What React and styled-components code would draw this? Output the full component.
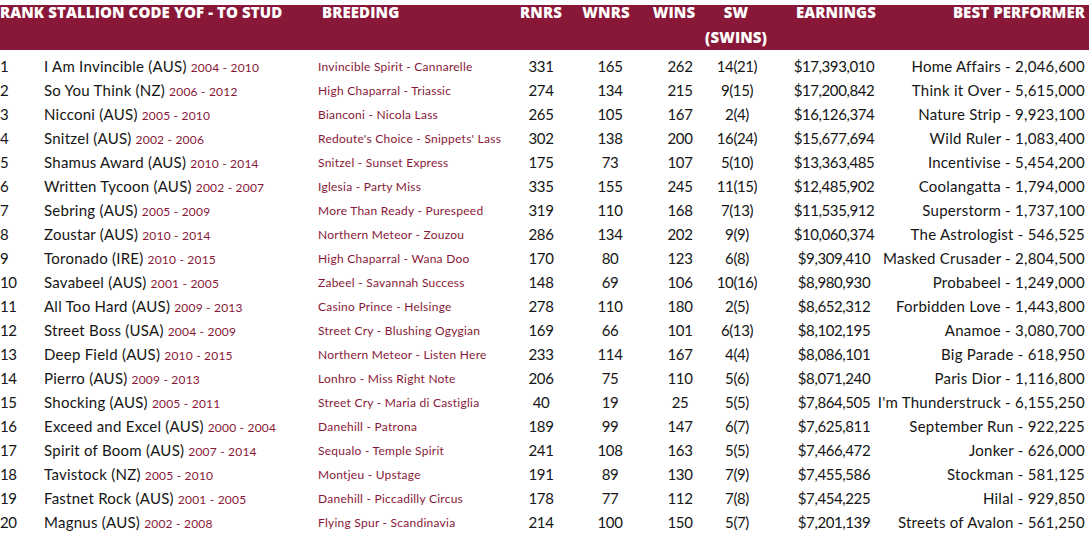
import React from 'react';
import styled, { createGlobalStyle } from 'styled-components';

const GlobalStyle = createGlobalStyle`
  html, body {
    margin: 0;
    padding: 0;
    background: #fff;
  }
  body {
    font-family: 'Lato', 'Liberation Sans', sans-serif;
    color: #151515;
  }
`;

const rows = [
  [1, 'I Am Invincible (AUS)', '2004 - 2010', 'Invincible Spirit - Cannarelle', 331, 165, 262, '14(21)', '$17,393,010', 'Home Affairs - 2,046,600'],
  [2, 'So You Think (NZ)', '2006 - 2012', 'High Chaparral - Triassic', 274, 134, 215, '9(15)', '$17,200,842', 'Think it Over - 5,615,000'],
  [3, 'Nicconi (AUS)', '2005 - 2010', 'Bianconi - Nicola Lass', 265, 105, 167, '2(4)', '$16,126,374', 'Nature Strip - 9,923,100'],
  [4, 'Snitzel (AUS)', '2002 - 2006', "Redoute's Choice - Snippets' Lass", 302, 138, 200, '16(24)', '$15,677,694', 'Wild Ruler - 1,083,400'],
  [5, 'Shamus Award (AUS)', '2010 - 2014', 'Snitzel - Sunset Express', 175, 73, 107, '5(10)', '$13,363,485', 'Incentivise - 5,454,200'],
  [6, 'Written Tycoon (AUS)', '2002 - 2007', 'Iglesia - Party Miss', 335, 155, 245, '11(15)', '$12,485,902', 'Coolangatta - 1,794,000'],
  [7, 'Sebring (AUS)', '2005 - 2009', 'More Than Ready - Purespeed', 319, 110, 168, '7(13)', '$11,535,912', 'Superstorm - 1,737,100'],
  [8, 'Zoustar (AUS)', '2010 - 2014', 'Northern Meteor - Zouzou', 286, 134, 202, '9(9)', '$10,060,374', 'The Astrologist - 546,525'],
  [9, 'Toronado (IRE)', '2010 - 2015', 'High Chaparral - Wana Doo', 170, 80, 123, '6(8)', '$9,309,410', 'Masked Crusader - 2,804,500'],
  [10, 'Savabeel (AUS)', '2001 - 2005', 'Zabeel - Savannah Success', 148, 69, 106, '10(16)', '$8,980,930', 'Probabeel - 1,249,000'],
  [11, 'All Too Hard (AUS)', '2009 - 2013', 'Casino Prince - Helsinge', 278, 110, 180, '2(5)', '$8,652,312', 'Forbidden Love - 1,443,800'],
  [12, 'Street Boss (USA)', '2004 - 2009', 'Street Cry - Blushing Ogygian', 169, 66, 101, '6(13)', '$8,102,195', 'Anamoe - 3,080,700'],
  [13, 'Deep Field (AUS)', '2010 - 2015', 'Northern Meteor - Listen Here', 233, 114, 167, '4(4)', '$8,086,101', 'Big Parade - 618,950'],
  [14, 'Pierro (AUS)', '2009 - 2013', 'Lonhro - Miss Right Note', 206, 75, 110, '5(6)', '$8,071,240', 'Paris Dior - 1,116,800'],
  [15, 'Shocking (AUS)', '2005 - 2011', 'Street Cry - Maria di Castiglia', 40, 19, 25, '5(5)', '$7,864,505', "I'm Thunderstruck - 6,155,250"],
  [16, 'Exceed and Excel (AUS)', '2000 - 2004', 'Danehill - Patrona', 189, 99, 147, '6(7)', '$7,625,811', 'September Run - 922,225'],
  [17, 'Spirit of Boom (AUS)', '2007 - 2014', 'Sequalo - Temple Spirit', 241, 108, 163, '5(5)', '$7,466,472', 'Jonker - 626,000'],
  [18, 'Tavistock (NZ)', '2005 - 2010', 'Montjeu - Upstage', 191, 89, 130, '7(9)', '$7,455,586', 'Stockman - 581,125'],
  [19, 'Fastnet Rock (AUS)', '2001 - 2005', 'Danehill - Piccadilly Circus', 178, 77, 112, '7(8)', '$7,454,225', 'Hilal - 929,850'],
  [20, 'Magnus (AUS)', '2002 - 2008', 'Flying Spur - Scandinavia', 214, 100, 150, '5(7)', '$7,201,139', 'Streets of Avalon - 561,250'],
];

const columns = '44px 274px 192px 62px 76px 64px 50px 144px 179px';

const Page = styled.div`
  width: 1089px;
  padding-top: 5px;
`;

const HeaderBar = styled.div`
  display: grid;
  grid-template-columns: ${columns};
  height: 45px;
  background: #891838;
  color: #fff;
  font-family: 'Open Sans', 'Lato', sans-serif;
  font-weight: 800;
  font-size: 15px;
  letter-spacing: 0.1px;
  text-transform: uppercase;
  line-height: 14px;
`;

const HeadCell = styled.div`
  display: flex;
  flex-direction: column;
  align-items: ${p => (p.$align === 'right' ? 'flex-end' : p.$align === 'center' ? 'center' : 'flex-start')};
  gap: 11px;
  padding-left: ${p => p.$pl || 0}px;
  transform: translateX(${p => p.$shift || 0}px);
  grid-column: ${p => p.$span || 'auto'};
  white-space: nowrap;
`;

const Body = styled.div`
  padding-top: 4px;
`;

const Row = styled.div`
  display: grid;
  grid-template-columns: ${columns};
  height: 24px;
  align-items: center;
  font-size: 15px;
`;

const Cell = styled.div`
  display: flex;
  justify-content: ${p => (p.$align === 'right' ? 'flex-end' : p.$align === 'center' ? 'center' : 'flex-start')};
  align-items: baseline;
  white-space: nowrap;
  letter-spacing: ${p => (p.$text ? '0.25px' : '-0.4px')};
`;

const Years = styled.span`
  margin-left: 4px;
  font-size: 12px;
  letter-spacing: 0.2px;
  color: #891838;
`;

const Breeding = styled(Cell)`
  font-size: 12px;
  letter-spacing: 0.25px;
  color: #891838;
`;

function App() {
  return (
    <Page>
      <GlobalStyle />
      <HeaderBar>
        <HeadCell $span="1 / span 2">Rank Stallion Code YOF - To Stud</HeadCell>
        <HeadCell $pl={4}>Breeding</HeadCell>
        <HeadCell $align="center">RNRS</HeadCell>
        <HeadCell $align="center" $shift={-4}>WNRS</HeadCell>
        <HeadCell $align="center" $shift={-6}>Wins</HeadCell>
        <HeadCell $align="center" $shift={-1}>
          <span>SW</span>
          <span>(SWINS)</span>
        </HeadCell>
        <HeadCell $align="center" $shift={2}>Earnings</HeadCell>
        <HeadCell $align="right">Best Performer</HeadCell>
      </HeaderBar>
      <Body>
        {rows.map(r => (
          <Row key={r[0]}>
            <Cell>{r[0]}</Cell>
            <Cell $text>
              {r[1]}
              <Years>{r[2]}</Years>
            </Cell>
            <Breeding>{r[3]}</Breeding>
            <Cell $align="center">{r[4]}</Cell>
            <Cell $align="center">{r[5]}</Cell>
            <Cell $align="center">{r[6]}</Cell>
            <Cell $align="center">{r[7]}</Cell>
            <Cell $align="center">{r[8]}</Cell>
            <Cell $align="right" $text>{r[9]}</Cell>
          </Row>
        ))}
      </Body>
    </Page>
  );
}

export default App;
